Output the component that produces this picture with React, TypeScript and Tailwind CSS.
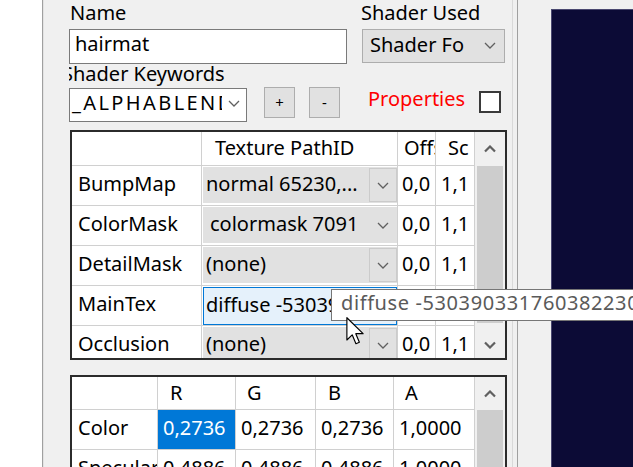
import type { ReactNode } from "react";

function Chevron() {
  return (
    <svg width="12" height="7" viewBox="0 0 12 7">
      <path d="M1 1 L6 6 L11 1" fill="none" stroke="#606060" strokeWidth="1.3" />
    </svg>
  );
}

function ScrollArrow({ down = false }: { down?: boolean }) {
  return (
    <svg width="12" height="8" viewBox="0 0 12 8">
      <path
        d={down ? "M1 1.5 L6 6.5 L11 1.5" : "M1 6.5 L6 1.5 L11 6.5"}
        fill="none"
        stroke="#606060"
        strokeWidth="2.2"
      />
    </svg>
  );
}

function Cell({ children, className = "" }: { children?: ReactNode; className?: string }) {
  return (
    <div className={`overflow-hidden whitespace-nowrap border-b border-r border-[#d0d0d0] ${className}`}>
      {children}
    </div>
  );
}

function TextureCombo({ label, boxed, indent = false }: { label: string; boxed: boolean; indent?: boolean }) {
  return (
    <Cell className="pb-[2px] pl-[1px] pt-[1px]">
      <div className="flex h-full bg-[#e1e1e1]">
        <span className={`min-w-0 flex-1 overflow-hidden leading-[34px] ${indent ? "pl-[7px]" : "pl-[3px]"}`}>
          {label}
        </span>
        <span
          className={`mb-[1px] mt-[1px] flex w-[28px] items-center justify-center border ${
            boxed ? "border-[#cbcbcb]" : "border-transparent"
          }`}
        >
          <Chevron />
        </span>
      </div>
    </Cell>
  );
}

const textureRows = [
  { name: "BumpMap", value: "normal 65230,...", boxed: true },
  { name: "ColorMask", value: "colormask 7091", boxed: false, indent: true },
  { name: "DetailMask", value: "(none)", boxed: true },
  { name: "MainTex", value: "", boxed: false },
  { name: "Occlusion", value: "(none)", boxed: true },
];

const colorRows = [
  { name: "Color", values: ["0,2736", "0,2736", "0,2736", "1,0000"] },
  { name: "Specular", values: ["0,4886", "0,4886", "0,4886", "1,0000"] },
];

export default function App() {
  return (
    <div className="relative flex h-[467px] w-[633px] overflow-hidden bg-[#f0f0f0] font-['Noto_Sans',sans-serif] text-[20px] text-black">
      <div className="w-[42px] shrink-0 bg-white" />
      <div className="w-px shrink-0 bg-[#a0a0a0]" />
      <div className="w-px shrink-0 bg-[#e3e3e3]" />

      <main className="w-[468px] shrink-0 pl-[25px]">
        <div className="flex h-[29px] pt-[3px] leading-[20px]">
          <span className="w-[292px] pl-[1px]">Name</span>
          <span>Shader Used</span>
        </div>

        <div className="flex h-[35px]">
          <div className="h-[35px] w-[278px] border border-[#7a7a7a] bg-white pl-[5px] leading-[27px]">hairmat</div>
          <div className="ml-[15px] flex h-[34px] w-[143px] border border-[#adadad] bg-[#e1e1e1]">
            <span className="w-[112px] overflow-hidden whitespace-nowrap pl-[7px] leading-[29px]">Shader Fo</span>
            <span className="flex flex-1 items-center justify-center pb-[2px]">
              <Chevron />
            </span>
          </div>
        </div>

        <div className="h-[24px] overflow-hidden leading-[20px]">
          <span className="-ml-[7px] block whitespace-nowrap">Shader Keywords</span>
        </div>

        <div className="flex h-[34px] items-start">
          <div className="flex h-[34px] w-[178px] border border-[#7a7a7a] bg-white">
            <span className="w-[152px] overflow-hidden whitespace-nowrap pl-[2px] leading-[27px] tracking-[2.4px]">
              _ALPHABLEND_ON
            </span>
            <span className="flex flex-1 items-center justify-center pb-[4px]">
              <Chevron />
            </span>
          </div>
          <button className="-mt-px ml-[17px] flex h-[31px] w-[31px] items-center justify-center border border-[#adadad] bg-[#e1e1e1] text-[15px] leading-none">
            +
          </button>
          <button className="-mt-px ml-[14px] flex h-[31px] w-[31px] items-center justify-center border border-[#adadad] bg-[#e1e1e1] text-[15px] leading-none">
            -
          </button>
          <span className="ml-[28px] mt-[1px] w-[111px] leading-[20px] text-[#ff0000]">Properties</span>
          <span className="mt-[3px] h-[22px] w-[22px] border-2 border-[#3a3a3a] bg-white" />
        </div>

        <section className="ml-[1px] mt-[8px] flex h-[230px] w-[437px] overflow-hidden border-2 border-[#2b2b2b] bg-white">
          <div className="grid w-[403px] grid-cols-[130px_196px_38px_39px] grid-rows-[34px_40px_40px_40px_40px_40px] leading-[36px]">
            <Cell />
            <Cell className="pl-[13px] leading-[31px]">Texture PathID</Cell>
            <Cell className="pl-[6px] leading-[31px]">Offset</Cell>
            <Cell className="pl-[12px] leading-[31px]">Sc</Cell>
            {textureRows.map((row) => (
              <div className="contents" key={row.name}>
                <Cell className="pl-[6px]">{row.name}</Cell>
                {row.name === "MainTex" ? (
                  <Cell className="pl-[1px] pt-[1px]">
                    <div className="h-[38px] overflow-hidden border border-[#0078d7] bg-[#e5f1fb] pl-[2px] leading-[33px]">
                      diffuse -530390331760382230
                    </div>
                  </Cell>
                ) : (
                  <TextureCombo label={row.value} boxed={row.boxed} indent={row.indent} />
                )}
                <Cell className="pl-[4px]">0,0</Cell>
                <Cell className="pl-[5px]">1,1</Cell>
              </div>
            ))}
          </div>
          <div className="flex w-[30px] flex-col bg-[#f0f0f0]">
            <div className="flex h-[34px] items-center justify-center">
              <ScrollArrow />
            </div>
            <div className="mx-[2px] h-[157px] bg-[#cdcdcd]" />
            <div className="flex justify-center pt-[18px]">
              <ScrollArrow down />
            </div>
          </div>
        </section>

        <section className="ml-[1px] mt-[15px] flex h-[200px] w-[437px] overflow-hidden border-2 border-[#2b2b2b] bg-white">
          <div className="grid w-[403px] grid-cols-[86px_78px_80px_78px_81px] grid-rows-[33px_40px_40px] leading-[36px]">
            <Cell />
            <Cell className="pl-[12px] leading-[32px]">R</Cell>
            <Cell className="pl-[11px] leading-[32px]">G</Cell>
            <Cell className="pl-[12px] leading-[32px]">B</Cell>
            <Cell className="pl-[11px] leading-[32px]">A</Cell>
            {colorRows.map((row, r) => (
              <div className="contents" key={row.name}>
                <Cell className="pl-[6px]">{row.name}</Cell>
                {row.values.map((value, i) => (
                  <Cell
                    className={r === 0 && i === 0 ? "bg-[#0078d7] pl-[5px] text-white" : "pl-[5px]"}
                    key={i}
                  >
                    {value}
                  </Cell>
                ))}
              </div>
            ))}
          </div>
          <div className="flex w-[30px] flex-col bg-[#f0f0f0]">
            <div className="flex h-[33px] items-center justify-center">
              <ScrollArrow />
            </div>
            <div className="mx-[2px] h-[160px] bg-[#cdcdcd]" />
          </div>
        </section>
      </main>

      <div className="w-px shrink-0 bg-[#d9d9d9]" />
      <div className="w-[4px] shrink-0" />
      <div className="w-px shrink-0 bg-[#a0a0a0]" />
      <div className="flex-1 pl-[33px] pt-[9px]">
        <div className="h-full w-full border-l border-t border-[#4a4870] bg-[#0c0b36]" />
      </div>

      <div className="absolute left-[331px] top-[289px] h-[32px] w-[400px] whitespace-nowrap border border-[#767676] bg-white pl-[9px] leading-[26px] tracking-[0.6px] text-[#5a5a5a]">
        diffuse -530390331760382230
      </div>

      <svg className="absolute left-[346px] top-[317px]" width="19" height="28" viewBox="0 0 13 19.5">
        <path
          d="M0.5 0.5 L0.5 16 L4.2 12.4 L6.8 18.6 L9.2 17.6 L6.7 11.6 L11.8 11.6 Z"
          fill="#ffffff"
          stroke="#000000"
          strokeWidth="0.8"
          strokeLinejoin="round"
        />
      </svg>
    </div>
  );
}
